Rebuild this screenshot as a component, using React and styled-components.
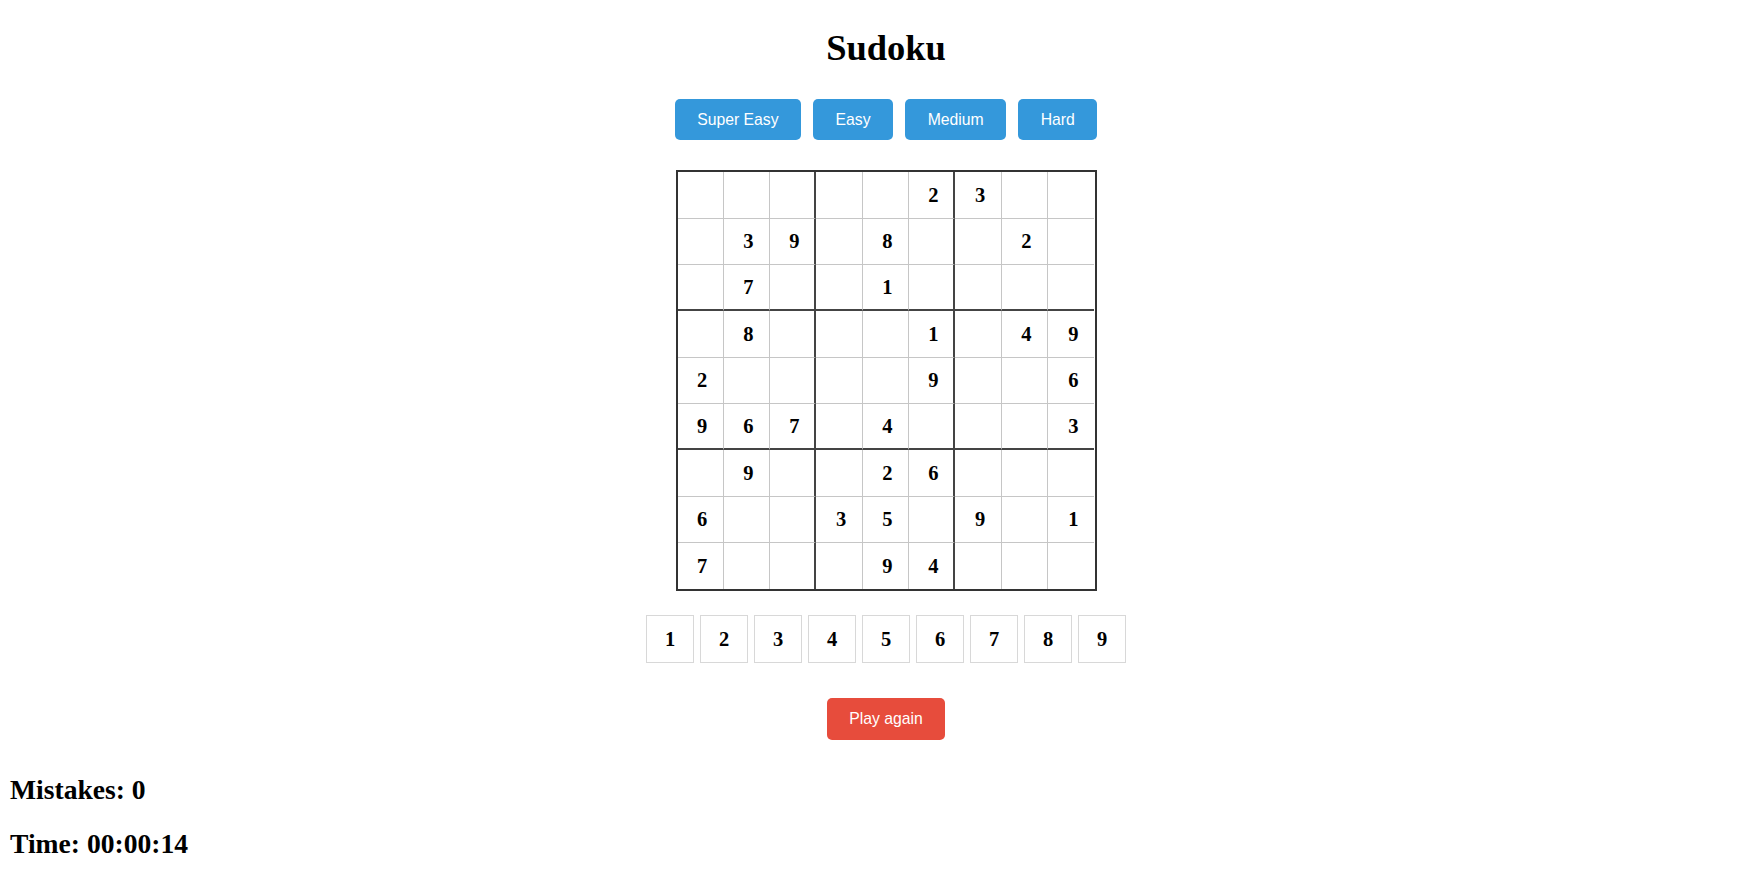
import React from "react";
import styled, { createGlobalStyle } from "styled-components";

const Global = createGlobalStyle`
  html, body { margin: 0; padding: 0; background: #fff; }
  body { font-family: "Liberation Serif", "Times New Roman", serif; color: #000; }
`;

const Page = styled.div`
  display: flex;
  flex-direction: column;
`;

const Center = styled.main`
  display: flex;
  flex-direction: column;
  align-items: center;
  padding-left: 17px;
`;

const Title = styled.h1`
  margin: 27px 0 0;
  font-size: 36.5px;
  line-height: 41px;
  font-weight: bold;
`;

const Levels = styled.div`
  display: flex;
  gap: 12px;
  margin-top: 31px;
`;

const Btn = styled.button`
  border: none;
  border-radius: 5px;
  background: ${(p) => (p.$variant === "red" ? "#e74c3c" : "#3498db")};
  color: #fff;
  font-family: "Liberation Sans", Arial, sans-serif;
  font-size: 15.75px;
  line-height: 18px;
  padding: ${(p) => (p.$variant === "red" ? "12px 22.5px" : "11.7px 22.5px")};
  cursor: pointer;
`;

const Board = styled.div`
  margin-top: 30px;
  width: 421px;
  height: 421px;
  box-sizing: border-box;
  border: 2px solid #333;
  display: grid;
  grid-template-columns: repeat(9, 1fr);
  grid-template-rows: repeat(9, 1fr);
`;

const Cell = styled.div`
  box-sizing: border-box;
  display: flex;
  align-items: center;
  justify-content: center;
  padding: 1px 0 0 4px;
  font-size: 20.5px;
  font-weight: bold;
  border-right: ${(p) => (p.$col === 8 ? "none" : p.$col % 3 === 2 ? "2px solid #444" : "1px solid #c6c6c6")};
  border-bottom: ${(p) => (p.$row === 8 ? "none" : p.$row % 3 === 2 ? "2px solid #444" : "1px solid #c6c6c6")};
`;

const Pad = styled.div`
  display: flex;
  gap: 6px;
  margin-top: 24px;
`;

const PadKey = styled.div`
  box-sizing: border-box;
  width: 48px;
  height: 48px;
  border: 1px solid #d8d8d8;
  background: #fff;
  display: flex;
  align-items: center;
  justify-content: center;
  font-size: 20.5px;
  font-weight: bold;
`;

const Again = styled.div`
  margin-top: 35px;
`;

const Stats = styled.section`
  margin-top: 35px;
  padding-left: 10px;
  display: flex;
  flex-direction: column;
  gap: 24px;
`;

const Stat = styled.h2`
  margin: 0;
  font-size: 27.6px;
  line-height: 30px;
  font-weight: bold;
`;

const puzzle = [
  "     23  ",
  " 39 8  2 ",
  " 7  1    ",
  " 8   1 49",
  "2    9  6",
  "967 4   3",
  " 9  26   ",
  "6  35 9 1",
  "7   94   ",
];

export default function App() {
  return (
    <Page>
      <Global />
      <Center>
        <Title>Sudoku</Title>
        <Levels>
          <Btn>Super Easy</Btn>
          <Btn>Easy</Btn>
          <Btn>Medium</Btn>
          <Btn>Hard</Btn>
        </Levels>
        <Board>
          {puzzle.map((row, r) =>
            row.split("").map((ch, c) => (
              <Cell key={`${r}-${c}`} $row={r} $col={c}>
                {ch.trim()}
              </Cell>
            ))
          )}
        </Board>
        <Pad>
          {[1, 2, 3, 4, 5, 6, 7, 8, 9].map((n) => (
            <PadKey key={n}>{n}</PadKey>
          ))}
        </Pad>
        <Again>
          <Btn $variant="red">Play again</Btn>
        </Again>
      </Center>
      <Stats>
        <Stat>Mistakes: 0</Stat>
        <Stat>Time: 00:00:14</Stat>
      </Stats>
    </Page>
  );
}
